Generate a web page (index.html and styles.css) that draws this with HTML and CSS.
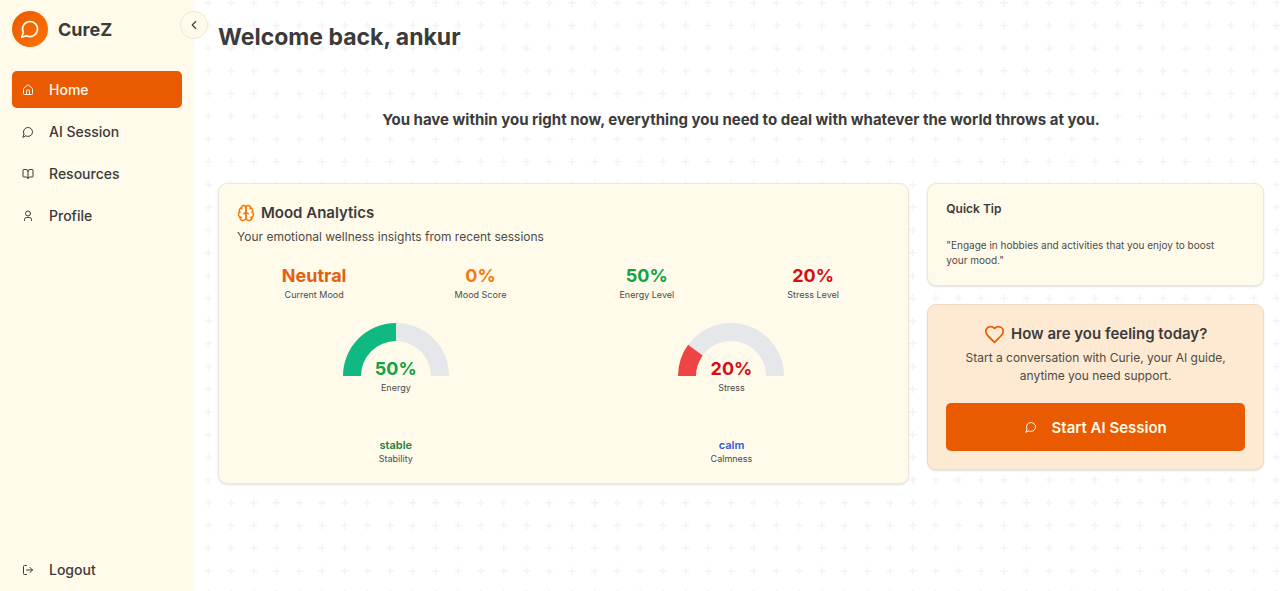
FILE: index.html
```html
<!DOCTYPE html>
<html lang="en">
<head>
<meta charset="utf-8">
<meta name="viewport" content="width=device-width, initial-scale=1">
<title>CureZ</title>
<link rel="stylesheet" href="styles.css">
</head>
<body>
<svg class="sprite" aria-hidden="true">
  <symbol id="bubble" viewBox="0 0 24 24"><path d="M7.9 20A9 9 0 1 0 4 16.1L2 22Z"/></symbol>
</svg>
<div class="app">
  <aside class="sidebar">
    <div class="brand">
      <span class="brand-mark"><svg class="icon icon-logo"><use href="#bubble"/></svg></span>
      <span class="brand-name">CureZ</span>
    </div>
    <button class="collapse" type="button" aria-label="Collapse sidebar">
      <svg class="icon icon-chevron" viewBox="0 0 24 24"><path d="m15 18-6-6 6-6"/></svg>
    </button>
    <nav class="nav">
      <a class="nav-item active" href="#">
        <svg class="icon icon-nav" viewBox="0 0 24 24"><path d="M15 21v-8a1 1 0 0 0-1-1h-4a1 1 0 0 0-1 1v8"/><path d="M3 10a2 2 0 0 1 .709-1.528l7-5.999a2 2 0 0 1 2.582 0l7 5.999A2 2 0 0 1 21 10v9a2 2 0 0 1-2 2H5a2 2 0 0 1-2-2z"/></svg>
        Home
      </a>
      <a class="nav-item" href="#">
        <svg class="icon icon-nav"><use href="#bubble"/></svg>
        AI Session
      </a>
      <a class="nav-item" href="#">
        <svg class="icon icon-nav" viewBox="0 0 24 24"><path d="M12 7v14"/><path d="M3 18a1 1 0 0 1-1-1V4a1 1 0 0 1 1-1h5a4 4 0 0 1 4 4 4 4 0 0 1 4-4h5a1 1 0 0 1 1 1v13a1 1 0 0 1-1 1h-6a3 3 0 0 0-3 3 3 3 0 0 0-3-3z"/></svg>
        Resources
      </a>
      <a class="nav-item" href="#">
        <svg class="icon icon-nav" viewBox="0 0 24 24"><circle cx="12" cy="7" r="5"/><path d="M19 21v-2a4 4 0 0 0-4-4H9a4 4 0 0 0-4 4v2"/></svg>
        Profile
      </a>
    </nav>
    <button class="nav-item logout" type="button">
      <svg class="icon icon-nav" viewBox="0 0 24 24"><path d="m16 17 5-5-5-5"/><path d="M21 12H9"/><path d="M9 21H5a2 2 0 0 1-2-2V5a2 2 0 0 1 2-2h4"/></svg>
      Logout
    </button>
  </aside>

  <main class="main">
    <h1 class="welcome">Welcome back, ankur</h1>
    <p class="quote">You have within you right now, everything you need to deal with whatever the world throws at you.</p>

    <div class="board">
      <section class="card analytics">
        <h2 class="card-title">
          <svg class="icon icon-title brain" viewBox="0 0 24 24"><path d="M12 5a3 3 0 1 0-5.997.125 4 4 0 0 0-2.526 5.77 4 4 0 0 0 .556 6.588A4 4 0 1 0 12 18Z"/><path d="M12 5a3 3 0 1 1 5.997.125 4 4 0 0 1 2.526 5.77 4 4 0 0 1-.556 6.588A4 4 0 1 1 12 18Z"/><path d="M15 13a4.500 4.500 0 0 1-3-4 4.500 4.500 0 0 1-3 4"/><path d="M17.599 6.500a3 3 0 0 0 .399-1.375"/><path d="M6.003 5.125A3 3 0 0 0 6.401 6.500"/><path d="M3.477 10.896a4 4 0 0 1 .585-.396"/><path d="M19.938 10.500a4 4 0 0 1 .585.396"/><path d="M6 18a4 4 0 0 1-1.967-.516"/><path d="M19.967 17.484A4 4 0 0 1 18 18"/></svg>
          Mood Analytics
        </h2>
        <p class="card-text">Your emotional wellness insights from recent sessions</p>
        <div class="stats">
          <div class="stat"><span class="value deep-orange">Neutral</span><span class="label">Current Mood</span></div>
          <div class="stat"><span class="value orange">0%</span><span class="label">Mood Score</span></div>
          <div class="stat"><span class="value green">50%</span><span class="label">Energy Level</span></div>
          <div class="stat"><span class="value red">20%</span><span class="label">Stress Level</span></div>
        </div>
        <div class="gauges">
          <div class="gauge">
            <svg class="dial" viewBox="0 0 106 53"><path fill="#e5e7eb" d="M53 0A53 53 0 0 1 106 53H88A35 35 0 0 0 53 18Z"/><path fill="#10b981" d="M0 53A53 53 0 0 1 53 0V18A35 35 0 0 0 18 53Z"/></svg>
            <span class="value green">50%</span><span class="label">Energy</span>
          </div>
          <div class="gauge">
            <svg class="dial" viewBox="0 0 106 53"><path fill="#e5e7eb" d="M10.100 21.800A53 53 0 0 1 106 53H88A35 35 0 0 0 24.700 32.400Z"/><path fill="#ef4444" d="M0 53A53 53 0 0 1 10.100 21.800L24.700 32.400A35 35 0 0 0 18 53Z"/></svg>
            <span class="value red">20%</span><span class="label">Stress</span>
          </div>
        </div>
        <div class="states">
          <div class="stat"><span class="state dark-green">stable</span><span class="label">Stability</span></div>
          <div class="stat"><span class="state blue">calm</span><span class="label">Calmness</span></div>
        </div>
      </section>

      <div class="side">
        <section class="card tip">
          <h2 class="tip-title">Quick Tip</h2>
          <p class="tip-text">"Engage in hobbies and activities that you enjoy to boost your mood."</p>
        </section>
        <section class="card feeling">
          <h2 class="card-title">
            <svg class="icon icon-heart" viewBox="0 0 24 24"><path d="M19 14c1.490-1.460 3-3.210 3-5.500A5.500 5.500 0 0 0 16.500 3c-1.760 0-3 .5-4.500 2-1.500-1.500-2.740-2-4.500-2A5.500 5.500 0 0 0 2 8.500c0 2.300 1.500 4.050 3 5.500l7 7Z"/></svg>
            How are you feeling today?
          </h2>
          <p class="card-text">Start a conversation with Curie, your AI guide, anytime you need support.</p>
          <button class="start" type="button">
            <svg class="icon icon-nav"><use href="#bubble"/></svg>
            Start AI Session
          </button>
        </section>
      </div>
    </div>
  </main>
</div>
</body>
</html>
```
FILE: styles.css
```css
*, *::before, *::after { box-sizing: border-box; }

body {
  margin: 0;
  color: #3b3b3b;
  background: #fff;
  font-family: Inter, "Liberation Sans", sans-serif;
  font-size: 12px;
}

h1, h2, p { margin: 0; }

button {
  font: inherit;
  color: inherit;
  border: 0;
  background: none;
  cursor: pointer;
}

.sprite { position: absolute; width: 0; height: 0; }

.icon {
  flex: none;
  fill: none;
  stroke: currentColor;
  stroke-width: 2;
  stroke-linecap: round;
  stroke-linejoin: round;
}
.icon-nav { width: 12px; height: 12px; }
.icon-chevron { width: 14px; height: 14px; }
.icon-title { width: 18px; height: 18px; }
.icon-logo { width: 20px; height: 20px; }
.icon-heart { width: 21px; height: 21px; color: #ea5a00; }

.app {
  display: flex;
  min-height: 100vh;
  background: url("data:image/svg+xml,%3Csvg xmlns='http://www.w3.org/2000/svg' viewBox='0 0 330 330'%3E%3Cdefs%3E%3Cpattern id='p' width='30' height='30' patternUnits='userSpaceOnUse'%3E%3Cpath fill='%23f3f3f3' d='M6 4V0H4v4H0v2h4v4h2V6h4V4H6z'/%3E%3C/pattern%3E%3C/defs%3E%3Cpath fill='url(%23p)' d='M0 0h330v330H0z'/%3E%3C/svg%3E") 0 -1px / 250px 250px;
}

.sidebar {
  position: relative;
  flex: none;
  display: flex;
  flex-direction: column;
  width: 194px;
  padding: 11px 12px 3px;
  background: #fffaea;
}

.brand {
  display: flex;
  align-items: center;
  gap: 10px;
  margin-bottom: 24px;
}
.brand-mark {
  display: grid;
  place-items: center;
  width: 36px;
  height: 36px;
  border-radius: 50%;
  color: #fffaea;
  background: linear-gradient(to bottom right, #ea5a00, #ff7204);
}
.brand-name { font-size: 18px; font-weight: 700; }

.collapse {
  position: absolute;
  top: 11px;
  right: -14px;
  display: grid;
  place-items: center;
  width: 28px;
  height: 28px;
  padding: 0;
  border: 1px solid #efe9dc;
  border-radius: 50%;
  background: #fffaea;
}

.nav { display: flex; flex-direction: column; gap: 5px; }
.nav-item {
  display: flex;
  align-items: center;
  gap: 15px;
  height: 37px;
  padding: 0 10px;
  border-radius: 5px;
  color: #3b3b3b;
  font-size: 14px;
  font-weight: 500;
  text-decoration: none;
}
.nav-item.active { color: #fffaea; background: #ea5a00; }
.logout { margin-top: auto; }

.main {
  flex: 1;
  min-width: 0;
  padding: 21px 16px 20px 24px;
}
.welcome { font-size: 23px; line-height: 32px; font-weight: 700; }
.quote {
  margin: 55px 0 52px;
  font-size: 15px;
  line-height: 23px;
  font-weight: 700;
  text-align: center;
}

.board {
  display: grid;
  grid-template-columns: repeat(3, 1fr);
  align-items: start;
  gap: 18px;
}
.side { display: grid; gap: 18px; }
.card {
  padding: 18px;
  border: 1px solid #eee6da;
  border-radius: 9px;
  background: #fffaea;
  box-shadow: 0 1px 2px rgb(0 0 0 / 12%);
}
.analytics { grid-column: span 2; }
.card-title {
  display: flex;
  align-items: center;
  gap: 6px;
  font-size: 15px;
  line-height: 22px;
  font-weight: 600;
}
.card-text {
  margin-top: 4px;
  color: #4d4b46;
  font-size: 12px;
  line-height: 18px;
}
.brain { color: #f57a0c; }

.stats {
  display: grid;
  grid-template-columns: repeat(4, 1fr);
  gap: 12px;
  margin-top: 18px;
}
.gauges, .states {
  display: grid;
  grid-template-columns: repeat(2, 1fr);
  gap: 18px;
}
.stat, .gauge { display: flex; flex-direction: column; align-items: center; }
.gauges { margin-top: 22px; }
.states { margin-top: 44px; }
.dial { width: 106px; height: 53px; margin-bottom: -19px; }
.value { position: relative; font-size: 18px; line-height: 24px; font-weight: 700; }
.label { font-size: 9px; line-height: 13px; color: #4d4b46; }
.state { font-size: 11px; line-height: 14px; font-weight: 600; }

.deep-orange { color: #e2600f; }
.orange { color: #f57a0c; }
.green { color: #12a244; }
.dark-green { color: #168040; }
.red { color: #d60d14; }
.blue { color: #2f5bdb; }

.tip { padding-bottom: 17px; }
.tip-title { font-size: 12px; line-height: 14px; font-weight: 600; }
.tip-text {
  max-width: 280px;
  margin-top: 22px;
  font-size: 10px;
  line-height: 15px;
  color: #4d4b46;
}

.feeling { border-color: #f5d9bd; background: #feead2; text-align: center; }
.feeling .card-title { justify-content: center; }
.start {
  display: flex;
  align-items: center;
  justify-content: center;
  gap: 15px;
  width: 100%;
  height: 48px;
  margin-top: 18px;
  border-radius: 5px;
  color: #fffaea;
  background: #ea5a00;
  font-size: 15px;
  font-weight: 600;
}
```
